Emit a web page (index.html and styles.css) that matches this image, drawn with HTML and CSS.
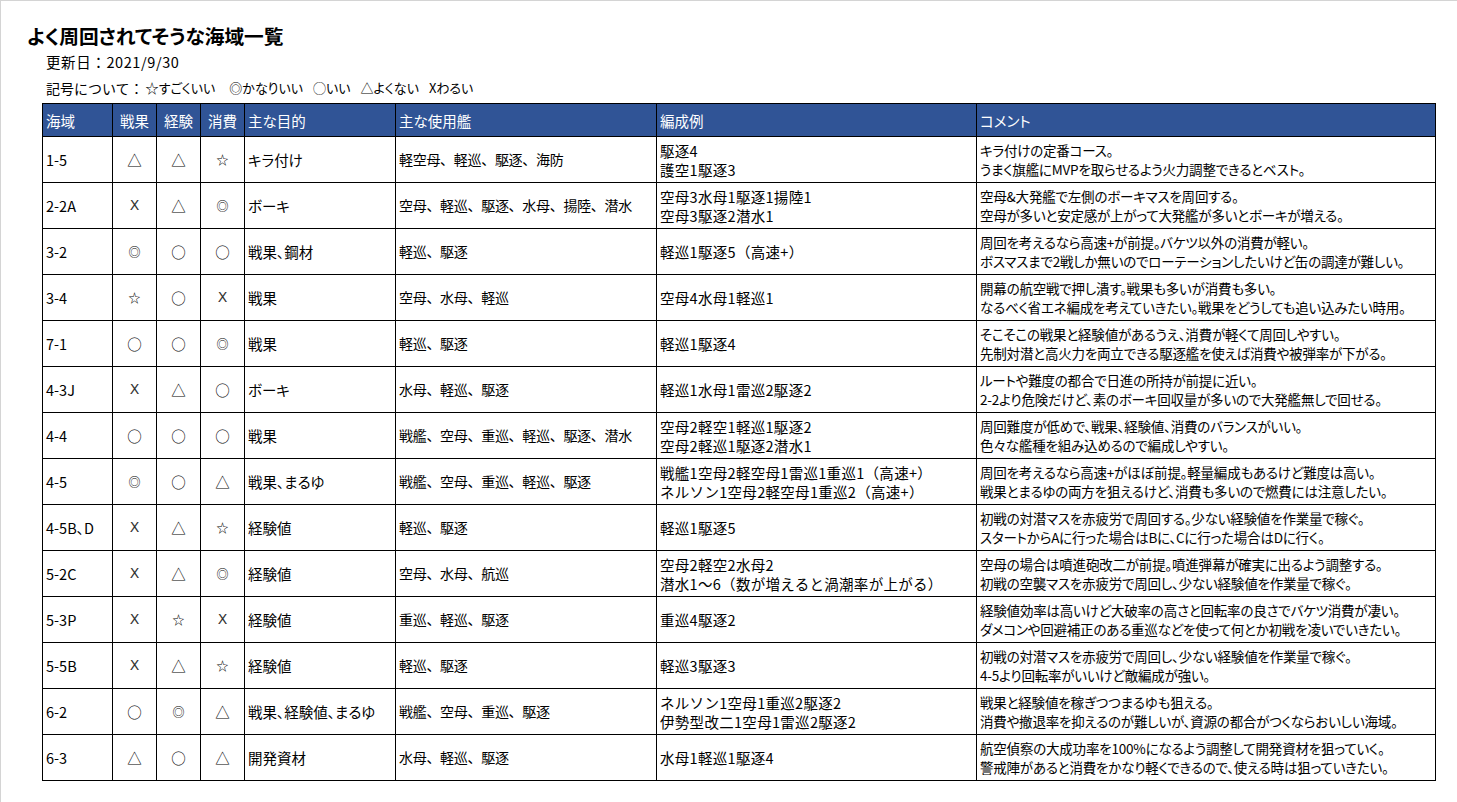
FILE: index.html
```html
<!DOCTYPE html>
<html lang="ja">
<head>
<meta charset="utf-8">
<title>よく周回されてそうな海域一覧</title>
<link rel="stylesheet" href="styles.css">
</head>
<body>
<div class="page">
  <h1 class="title">よく周回されてそうな海域一覧</h1>
  <p class="meta date">更新日：2021/9/30</p>
  <p class="meta legend"><span class="legend-head">記号について：</span><span>☆すごくいい</span><span class="wide">◎かなりいい</span><span>◯いい</span><span>△よくない</span><span>Xわるい</span></p>
  <table class="grid">
    <colgroup>
      <col class="c-area"><col class="c-sym"><col class="c-sym"><col class="c-sym">
      <col class="c-goal"><col class="c-ships"><col class="c-fleet"><col class="c-comment">
    </colgroup>
    <thead>
      <tr>
        <th>海域</th><th class="sym">戦果</th><th class="sym">経験</th><th class="sym">消費</th>
        <th>主な目的</th><th>主な使用艦</th><th>編成例</th><th>コメント</th>
      </tr>
    </thead>
    <tbody>
      <tr><td>1-5</td><td class="sym">△</td><td class="sym">△</td><td class="sym small">☆</td><td>キラ付け</td><td class="ships">軽空母、軽巡、駆逐、海防</td><td class="fleet">駆逐4<br>護空1駆逐3</td><td class="comment">キラ付けの定番コース。<br>うまく旗艦にMVPを取らせるよう火力調整できるとベスト。</td></tr>
      <tr><td>2-2A</td><td class="sym x">X</td><td class="sym">△</td><td class="sym small">◎</td><td>ボーキ</td><td class="ships">空母、軽巡、駆逐、水母、揚陸、潜水</td><td class="fleet">空母3水母1駆逐1揚陸1<br>空母3駆逐2潜水1</td><td class="comment">空母&amp;大発艦で左側のボーキマスを周回する。<br>空母が多いと安定感が上がって大発艦が多いとボーキが増える。</td></tr>
      <tr><td>3-2</td><td class="sym small">◎</td><td class="sym">○</td><td class="sym">○</td><td>戦果、鋼材</td><td class="ships">軽巡、駆逐</td><td class="fleet">軽巡1駆逐5（高速+）</td><td class="comment">周回を考えるなら高速+が前提。バケツ以外の消費が軽い。<br>ボスマスまで2戦しか無いのでローテーションしたいけど缶の調達が難しい。</td></tr>
      <tr><td>3-4</td><td class="sym small">☆</td><td class="sym">○</td><td class="sym x">X</td><td>戦果</td><td class="ships">空母、水母、軽巡</td><td class="fleet">空母4水母1軽巡1</td><td class="comment">開幕の航空戦で押し潰す。戦果も多いが消費も多い。<br>なるべく省エネ編成を考えていきたい。戦果をどうしても追い込みたい時用。</td></tr>
      <tr><td>7-1</td><td class="sym">○</td><td class="sym">○</td><td class="sym small">◎</td><td>戦果</td><td class="ships">軽巡、駆逐</td><td class="fleet">軽巡1駆逐4</td><td class="comment">そこそこの戦果と経験値があるうえ、消費が軽くて周回しやすい。<br>先制対潜と高火力を両立できる駆逐艦を使えば消費や被弾率が下がる。</td></tr>
      <tr><td>4-3J</td><td class="sym x">X</td><td class="sym">△</td><td class="sym">○</td><td>ボーキ</td><td class="ships">水母、軽巡、駆逐</td><td class="fleet">軽巡1水母1雷巡2駆逐2</td><td class="comment">ルートや難度の都合で日進の所持が前提に近い。<br>2-2より危険だけど、素のボーキ回収量が多いので大発艦無しで回せる。</td></tr>
      <tr><td>4-4</td><td class="sym">○</td><td class="sym">○</td><td class="sym">○</td><td>戦果</td><td class="ships">戦艦、空母、重巡、軽巡、駆逐、潜水</td><td class="fleet">空母2軽空1軽巡1駆逐2<br>空母2軽巡1駆逐2潜水1</td><td class="comment">周回難度が低めで、戦果、経験値、消費のバランスがいい。<br>色々な艦種を組み込めるので編成しやすい。</td></tr>
      <tr><td>4-5</td><td class="sym small">◎</td><td class="sym">○</td><td class="sym">△</td><td>戦果、まるゆ</td><td class="ships">戦艦、空母、重巡、軽巡、駆逐</td><td class="fleet">戦艦1空母2軽空母1雷巡1重巡1（高速+）<br>ネルソン1空母2軽空母1重巡2（高速+）</td><td class="comment">周回を考えるなら高速+がほぼ前提。軽量編成もあるけど難度は高い。<br>戦果とまるゆの両方を狙えるけど、消費も多いので燃費には注意したい。</td></tr>
      <tr><td>4-5B、D</td><td class="sym x">X</td><td class="sym">△</td><td class="sym small">☆</td><td>経験値</td><td class="ships">軽巡、駆逐</td><td class="fleet">軽巡1駆逐5</td><td class="comment">初戦の対潜マスを赤疲労で周回する。少ない経験値を作業量で稼ぐ。<br>スタートからAに行った場合はBに、Cに行った場合はDに行く。</td></tr>
      <tr><td>5-2C</td><td class="sym x">X</td><td class="sym">△</td><td class="sym small">◎</td><td>経験値</td><td class="ships">空母、水母、航巡</td><td class="fleet">空母2軽空2水母2<br>潜水1～6（数が増えると渦潮率が上がる）</td><td class="comment">空母の場合は噴進砲改二が前提。噴進弾幕が確実に出るよう調整する。<br>初戦の空襲マスを赤疲労で周回し、少ない経験値を作業量で稼ぐ。</td></tr>
      <tr><td>5-3P</td><td class="sym x">X</td><td class="sym small">☆</td><td class="sym x">X</td><td>経験値</td><td class="ships">重巡、軽巡、駆逐</td><td class="fleet">重巡4駆逐2</td><td class="comment">経験値効率は高いけど大破率の高さと回転率の良さでバケツ消費が凄い。<br>ダメコンや回避補正のある重巡などを使って何とか初戦を凌いでいきたい。</td></tr>
      <tr><td>5-5B</td><td class="sym x">X</td><td class="sym">△</td><td class="sym small">☆</td><td>経験値</td><td class="ships">軽巡、駆逐</td><td class="fleet">軽巡3駆逐3</td><td class="comment">初戦の対潜マスを赤疲労で周回し、少ない経験値を作業量で稼ぐ。<br>4-5より回転率がいいけど敵編成が強い。</td></tr>
      <tr><td>6-2</td><td class="sym">○</td><td class="sym small">◎</td><td class="sym">△</td><td>戦果、経験値、まるゆ</td><td class="ships">戦艦、空母、重巡、駆逐</td><td class="fleet">ネルソン1空母1重巡2駆逐2<br>伊勢型改二1空母1雷巡2駆逐2</td><td class="comment">戦果と経験値を稼ぎつつまるゆも狙える。<br>消費や撤退率を抑えるのが難しいが、資源の都合がつくならおいしい海域。</td></tr>
      <tr><td>6-3</td><td class="sym">△</td><td class="sym">○</td><td class="sym">△</td><td>開発資材</td><td class="ships">水母、軽巡、駆逐</td><td class="fleet">水母1軽巡1駆逐4</td><td class="comment">航空偵察の大成功率を100%になるよう調整して開発資材を狙っていく。<br>警戒陣があると消費をかなり軽くできるので、使える時は狙っていきたい。</td></tr>
    </tbody>
  </table>
</div>
</body>
</html>
```

FILE: styles.css
```css
html, body {
  margin: 0;
  padding: 0;
  background: #ffffff;
}

body {
  font-family: "Noto Sans CJK JP", "Noto Sans", sans-serif;
  font-feature-settings: "palt";
  color: #000000;
  font-size: 14.5px;
}

.page {
  box-sizing: border-box;
  height: 802px;
  border-top: 1px solid #d4d4d4;
  border-left: 1px solid #d4d4d4;
  padding: 0 0 0 41px;
}

.title {
  margin: 22px 0 0 -15px;
  font-size: 19.7px;
  font-weight: bold;
  line-height: 26px;
}

.meta {
  margin: 0 0 0 4px;
  line-height: 26px;
}

.date {
  font-feature-settings: normal;
  letter-spacing: 0.6px;
}

.legend {
  display: flex;
  gap: 10px;
  font-size: 13px;
}

.legend-head {
  margin-right: -8px;
  font-feature-settings: normal;
  font-size: 14px;
}

.legend .wide {
  margin-left: 4px;
}

.grid {
  margin-top: 2px;
  border-collapse: collapse;
  table-layout: fixed;
  width: 1394px;
}

.c-area { width: 70px; }
.c-sym { width: 44px; }
.c-goal { width: 151px; }
.c-ships { width: 261px; }
.c-fleet { width: 320px; }
.c-comment { width: 459px; }

.grid th,
.grid td {
  border: 1px solid #000000;
  padding: 0 3px;
  text-align: left;
  vertical-align: middle;
  line-height: 19px;
  white-space: nowrap;
  overflow: hidden;
}

.grid th {
  background: #305496;
  color: #ffffff;
  font-weight: normal;
  height: 32px;
}

.grid td {
  height: 45px;
}

.grid .sym {
  text-align: center;
  padding: 0;
}

.grid td.small {
  font-size: 12px;
}

.grid td.x {
  font-family: "DejaVu Sans", sans-serif;
  font-size: 14px;
  color: #333333;
}

.grid td.ships {
  font-feature-settings: normal;
  font-size: 14px;
  letter-spacing: -0.3px;
}

.grid td.fleet {
  font-feature-settings: normal;
  letter-spacing: 0.3px;
}

.grid td.comment {
  font-size: 13.5px;
  letter-spacing: -0.2px;
}
```
